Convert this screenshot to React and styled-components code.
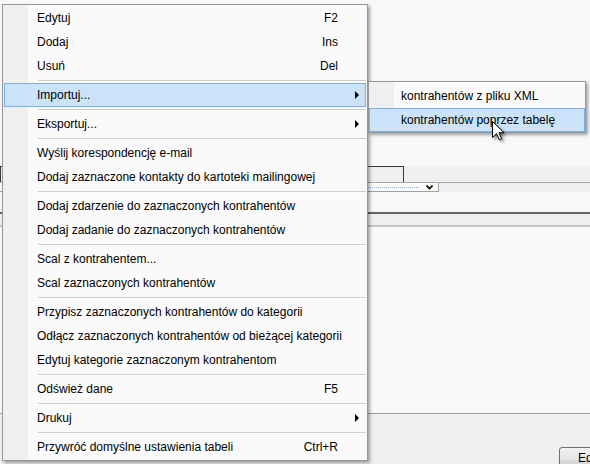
import React from 'react';
import styled, { createGlobalStyle } from 'styled-components';

const GlobalStyle = createGlobalStyle`
  html, body {
    margin: 0;
    padding: 0;
    background: #f8f8f8;
  }
  body {
    font-family: "Liberation Sans", Arial, sans-serif;
  }
  *, *::before, *::after {
    box-sizing: border-box;
  }
`;

const Page = styled.div`
  position: relative;
  width: 590px;
  height: 464px;
  overflow: hidden;
  background: #f8f8f8;
  font-family: "Liberation Sans", Arial, sans-serif;
  font-size: 12px;
  color: #000;
`;

/* ---------- window behind the menu ---------- */

const Backdrop = styled.div`
  display: flex;
  flex-direction: column;
  width: 100%;
  height: 100%;
`;

const TopArea = styled.div`
  flex: none;
  height: 166px;
`;

const dotted = `repeating-conic-gradient(#ebebeb 0 25%, #f4f4f4 0 50%) 0 0 / 2px 2px`;

const FieldRow = styled.div`
  flex: none;
  display: flex;
  height: 16px;
`;

const TextBox = styled.div`
  width: 404px;
  height: 17px;
  border: 1px solid #3a3a3a;
  background: #efefef;
`;

const Band = styled.div`
  flex: 1;
  background: ${p => (p.$dotted ? dotted : p.$color || '#efefef')};
`;

const Rule = styled.div`
  flex: none;
  height: ${p => p.$size || 1}px;
  background: ${p => p.$color || '#a5a5a5'};
`;

const ComboRow = styled.div`
  flex: none;
  display: flex;
  height: 9px;
`;

const Combo = styled.div`
  width: 439px;
  display: flex;
  align-items: center;
  justify-content: flex-end;
  padding: 0 5px 0 368px;
  background: #fafafa;
  border-right: 1px solid #a0a0a0;
  border-bottom: 1px solid #a0a0a0;
`;

const FocusLine = styled.div`
  flex: 1;
  height: 1px;
  margin-right: 7px;
  background: repeating-linear-gradient(to right, #7fb0e6 0 1px, transparent 1px 2px);
`;

const Chevron = styled.svg`
  width: 7px;
  height: 5px;
  display: block;
`;

const Gap = styled.div`
  flex: none;
  height: ${p => p.$h}px;
  background: ${p => p.$color || 'transparent'};
`;

const Fill = styled.div`
  flex: 1;
`;

const BottomBar = styled.div`
  flex: none;
  height: 50px;
  display: flex;
  align-items: flex-start;
  padding: 33px 0 0 559px;
  background: #efefef;
`;

const Button = styled.div`
  flex: none;
  width: 80px;
  height: 26px;
  padding: 3px 0 0 18px;
  border: 1px solid #707070;
  border-radius: 3px;
  background: linear-gradient(#f2f2f2, #e5e5e5 50%, #d9d9d9 51%, #cfcfcf);
  font-size: 12px;
  color: #000;
`;

/* ---------- context menu ---------- */

const Menu = styled.div`
  position: absolute;
  left: ${p => p.$left}px;
  top: ${p => p.$top}px;
  width: ${p => p.$width}px;
  padding: ${p => p.$pad || '1px 0'};
  border: 1px solid #979797;
  background:
    linear-gradient(to right, transparent 0 25px, #fafafa 25px),
    ${dotted};
  box-shadow: 2px 2px 3px rgba(0, 0, 0, 0.35);
  z-index: ${p => p.$z || 1};
`;

const Item = styled.div`
  display: flex;
  align-items: center;
  height: 24px;
  margin: 0 1px;
  padding-left: 32px;
  border: 1px solid ${p => (p.$active ? '#7ab2e8' : 'transparent')};
  background: ${p =>
    p.$active
      ? 'repeating-conic-gradient(#c6dff6 0 25%, #d0e6f9 0 50%) 0 0 / 2px 2px'
      : 'transparent'};
  white-space: nowrap;
`;

const SubItem = styled(Item)`
  margin: 0;
  padding-left: 31px;
`;

const Label = styled.span`
  flex: 1;
  padding-bottom: 1px;
`;

const Shortcut = styled.span`
  padding-bottom: 1px;
`;

const ArrowCell = styled.span`
  flex: none;
  width: 27px;
  display: flex;
  justify-content: flex-end;
  padding-right: 6px;
`;

const Arrow = styled.span`
  width: 0;
  height: 0;
  border-left: 4px solid #000;
  border-top: 4px solid transparent;
  border-bottom: 4px solid transparent;
`;

const Separator = styled.div`
  height: 5px;
  padding-top: 2px;
  margin: 0 1px 0 35px;
  &::after {
    content: '';
    display: block;
    height: 2px;
    background: #cdcdcd;
    border-bottom: 1px solid #ffffff;
  }
`;

const Cursor = styled.svg`
  position: absolute;
  left: 492px;
  top: 121px;
  width: 14px;
  height: 21px;
  z-index: 5;
  filter: drop-shadow(2px 2px 1.5px rgba(0, 0, 0, 0.45));
`;

const menuItems = [
  { label: 'Edytuj', key: 'F2' },
  { label: 'Dodaj', key: 'Ins' },
  { label: 'Usuń', key: 'Del' },
  'sep',
  { label: 'Importuj...', sub: true, active: true },
  'sep',
  { label: 'Eksportuj...', sub: true },
  'sep',
  { label: 'Wyślij korespondencję e-mail' },
  { label: 'Dodaj zaznaczone kontakty do kartoteki mailingowej' },
  'sep',
  { label: 'Dodaj zdarzenie do zaznaczonych kontrahentów' },
  { label: 'Dodaj zadanie do zaznaczonych kontrahentów' },
  'sep',
  { label: 'Scal z kontrahentem...' },
  { label: 'Scal zaznaczonych kontrahentów' },
  'sep',
  { label: 'Przypisz zaznaczonych kontrahentów do kategorii' },
  { label: 'Odłącz zaznaczonych kontrahentów od bieżącej kategorii' },
  { label: 'Edytuj kategorie zaznaczonym kontrahentom' },
  'sep',
  { label: 'Odśwież dane', key: 'F5' },
  'sep',
  { label: 'Drukuj', sub: true },
  'sep',
  { label: 'Przywróć domyślne ustawienia tabeli', key: 'Ctrl+R' },
];

const subItems = [
  { label: 'kontrahentów z pliku XML' },
  { label: 'kontrahentów poprzez tabelę', active: true },
];

const App = () => {
  return (
    <>
      <GlobalStyle />
      <Page>
        <Backdrop>
          <TopArea />
          <FieldRow>
            <TextBox />
            <Band $dotted />
          </FieldRow>
          <Rule $color="#a8a8a8" />
          <ComboRow>
            <Combo>
              <FocusLine />
              <Chevron viewBox="0 0 7 5">
                <path d="M0.5 0.5 L3.5 3.5 L6.5 0.5" fill="none" stroke="#000" strokeWidth="1.6" />
              </Chevron>
            </Combo>
            <Band $color="#efefef" />
          </ComboRow>
          <Gap $h={20} />
          <Rule $size={2} $color="#666666" />
          <Gap $h={11} $color="#efefef" />
          <Rule $size={2} $color="#c4c4c4" />
          <Fill />
          <Rule $color="#a0a0a0" />
          <BottomBar>
            <Button>Edytuj</Button>
          </BottomBar>
        </Backdrop>

        <Menu $left={2} $top={4} $width={366}>
          {menuItems.map((it, i) =>
            it === 'sep' ? (
              <Separator key={i} />
            ) : (
              <Item key={i} $active={it.active}>
                <Label>{it.label}</Label>
                {it.key && <Shortcut>{it.key}</Shortcut>}
                <ArrowCell>{it.sub && <Arrow />}</ArrowCell>
              </Item>
            )
          )}
        </Menu>

        <Menu $left={368} $top={81} $width={218} $pad="2px 0 0" $z={2}>
          {subItems.map((it, i) => (
            <SubItem key={i} $active={it.active}>
              <Label>{it.label}</Label>
            </SubItem>
          ))}
        </Menu>

        <Cursor viewBox="0 0 14 21">
          <path
            d="M0.5 0.5 L0.5 16.5 L4.5 12.6 L7.3 18.8 L9.6 17.8 L6.9 11.7 L12 11.7 Z"
            fill="#ffffff"
            stroke="#000000"
            strokeWidth="1"
            strokeLinejoin="miter"
          />
        </Cursor>
      </Page>
    </>
  );
};

export default App;
